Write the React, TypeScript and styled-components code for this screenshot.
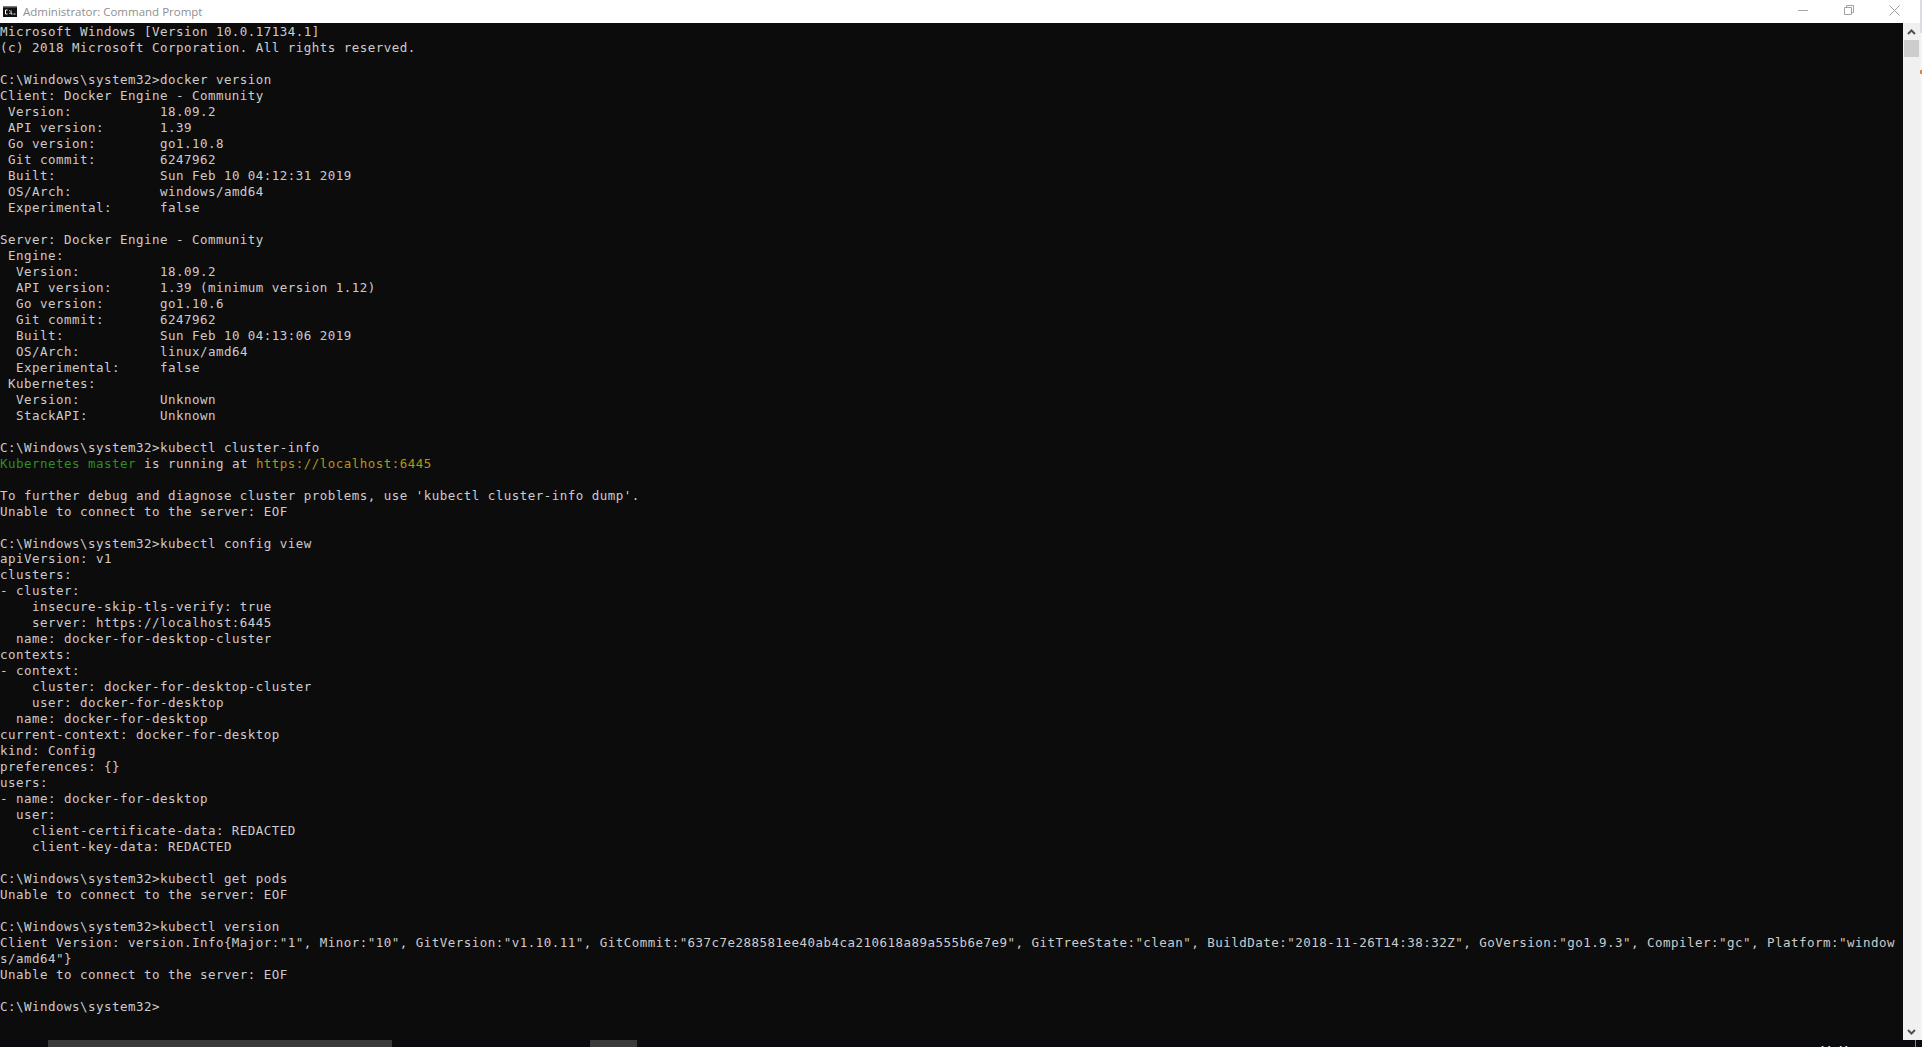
import React from "react";
import styled, { createGlobalStyle } from "styled-components";

const Global = createGlobalStyle`
  html, body { margin: 0; padding: 0; background: #0c0c0c; overflow: hidden; }
`;

const Window = styled.div`
  width: 1922px;
  height: 1047px;
  display: flex;
  flex-direction: column;
  overflow: hidden;
  background: #0c0c0c;
`;

const TitleBar = styled.header`
  height: 23px;
  flex: none;
  display: flex;
  align-items: center;
  background: #fff;
  padding-left: 3px;
`;

const TitleText = styled.span`
  margin-left: 6px;
  font: 11.5px/23px "Open Sans", "Liberation Sans", sans-serif;
  color: #8f8f8f;
  flex: 1;
`;

const WinButton = styled.span`
  width: 45.5px;
  height: 23px;
  display: flex;
  align-items: center;
  justify-content: center;
  margin-top: -3px;
`;

const TitleEdge = styled.div`
  width: 2px;
  height: 23px;
  margin-left: 3px;
  flex: none;
  background: #dcdce4;
`;

const Body = styled.div`
  flex: 1;
  display: flex;
  min-height: 0;
`;

const Console = styled.main`
  width: 1903px;
  flex: none;
  box-sizing: border-box;
  padding: 1px 7px 0 0;
  background: #0c0c0c;
  color: #cccccc;
  font-family: "DejaVu Sans Mono", "Liberation Mono", monospace;
  font-size: 12.5px;
  letter-spacing: 0.47px;
  line-height: 15.98px;
  white-space: pre-wrap;
  word-break: break-all;
  overflow: hidden;
`;

const Green = styled.span`
  color: #2c8f22;
`;

const Yellow = styled.span`
  color: #b3941a;
`;

const ScrollBar = styled.aside`
  width: 17px;
  flex: none;
  display: flex;
  flex-direction: column;
  align-items: center;
  background: #f0f0f0;
`;

const Arrow = styled.span`
  height: 17px;
  width: 17px;
  display: flex;
  align-items: center;
  justify-content: center;
`;

const Thumb = styled.div`
  width: 15px;
  height: 17px;
  background: #cdcdcd;
`;

const Track = styled.div`
  flex: 1;
`;

const Edge = styled.div`
  width: 2px;
  flex: none;
  background: linear-gradient(#dcdce4 0 10px, #f4f4f4 10px);
  padding-top: 47px;
`;

const EdgeMark = styled.div`
  height: 4px;
  background: #d98c4a;
`;

const Taskbar = styled.footer`
  height: 7px;
  flex: none;
  display: flex;
  background: #0a0c0f;
  overflow: hidden;
`;

const TaskItem = styled.div<{ $w: number; $ml: number }>`
  width: ${(p) => p.$w}px;
  margin-left: ${(p) => p.$ml}px;
  background: #3a3a3a;
  flex: none;
`;

const Clock = styled.span`
  margin-left: 1182px;
  width: 90px;
  flex: none;
  color: #fff;
  font: 12px/14px "Open Sans", "Liberation Sans", sans-serif;
  padding-top: 4px;
`;

const TrayLine = styled.div`
  margin-left: 6px;
  width: 1px;
  background: #8a8a8a;
  flex: none;
`;

const longLine =
  'Client Version: version.Info{Major:"1", Minor:"10", GitVersion:"v1.10.11", GitCommit:"637c7e288581ee40ab4ca210618a89a555b6e7e9", GitTreeState:"clean", BuildDate:"2018-11-26T14:38:32Z", GoVersion:"go1.9.3", Compiler:"gc", Platform:"windows/amd64"}';

const before = `Microsoft Windows [Version 10.0.17134.1]
(c) 2018 Microsoft Corporation. All rights reserved.

C:\\Windows\\system32>docker version
Client: Docker Engine - Community
 Version:           18.09.2
 API version:       1.39
 Go version:        go1.10.8
 Git commit:        6247962
 Built:             Sun Feb 10 04:12:31 2019
 OS/Arch:           windows/amd64
 Experimental:      false

Server: Docker Engine - Community
 Engine:
  Version:          18.09.2
  API version:      1.39 (minimum version 1.12)
  Go version:       go1.10.6
  Git commit:       6247962
  Built:            Sun Feb 10 04:13:06 2019
  OS/Arch:          linux/amd64
  Experimental:     false
 Kubernetes:
  Version:          Unknown
  StackAPI:         Unknown

C:\\Windows\\system32>kubectl cluster-info
`;

const after = `

To further debug and diagnose cluster problems, use 'kubectl cluster-info dump'.
Unable to connect to the server: EOF

C:\\Windows\\system32>kubectl config view
apiVersion: v1
clusters:
- cluster:
    insecure-skip-tls-verify: true
    server: https://localhost:6445
  name: docker-for-desktop-cluster
contexts:
- context:
    cluster: docker-for-desktop-cluster
    user: docker-for-desktop
  name: docker-for-desktop
current-context: docker-for-desktop
kind: Config
preferences: {}
users:
- name: docker-for-desktop
  user:
    client-certificate-data: REDACTED
    client-key-data: REDACTED

C:\\Windows\\system32>kubectl get pods
Unable to connect to the server: EOF

C:\\Windows\\system32>kubectl version
${longLine}
Unable to connect to the server: EOF

C:\\Windows\\system32>`;

const CmdIcon = () => (
  <svg width="14" height="11" viewBox="0 0 14 11">
    <rect width="14" height="11" fill="#111" />
    <rect x="0" y="0" width="14" height="1.5" fill="#777" />
    <path d="M4.5 4H2.5V8H4.5M6.5 4.5V5.2M6.5 7V7.7M8 8V4.5M8 8H9.5M10.5 8H12.5" stroke="#fff" strokeWidth="1" fill="none" />
  </svg>
);

const App = () => (
  <Window>
    <Global />
    <TitleBar>
      <CmdIcon />
      <TitleText>Administrator: Command Prompt</TitleText>
      <WinButton>
        <svg width="10" height="1" viewBox="0 0 10 1">
          <rect width="10" height="1" fill="#a8a8a8" />
        </svg>
      </WinButton>
      <WinButton>
        <svg width="10" height="10" viewBox="0 0 10 10" fill="none" stroke="#a0a0a0">
          <path d="M.5 2.5h7v7h-7zM2.5 2.5v-2h7v7h-2" />
        </svg>
      </WinButton>
      <WinButton>
        <svg width="11" height="11" viewBox="0 0 11 11" fill="none" stroke="#a0a0a0">
          <path d="M.5.5l10 10M10.5.5l-10 10" />
        </svg>
      </WinButton>
      <TitleEdge />
    </TitleBar>
    <Body>
      <Console>
        {before}
        <Green>Kubernetes master</Green> is running at <Yellow>https://localhost:6445</Yellow>
        {after}
      </Console>
      <ScrollBar>
        <Arrow>
          <svg width="9" height="6" viewBox="0 0 9 6" fill="none" stroke="#505050" strokeWidth="2">
            <path d="M1 5l3.5-3.5L8 5" />
          </svg>
        </Arrow>
        <Thumb />
        <Track />
        <Arrow>
          <svg width="9" height="6" viewBox="0 0 9 6" fill="none" stroke="#505050" strokeWidth="2">
            <path d="M1 1l3.5 3.5L8 1" />
          </svg>
        </Arrow>
      </ScrollBar>
      <Edge>
        <EdgeMark />
      </Edge>
    </Body>
    <Taskbar>
      <TaskItem $w={344} $ml={48} />
      <TaskItem $w={47} $ml={198} />
      <Clock>11:41</Clock>
      <TrayLine />
    </Taskbar>
  </Window>
);

export default App;
